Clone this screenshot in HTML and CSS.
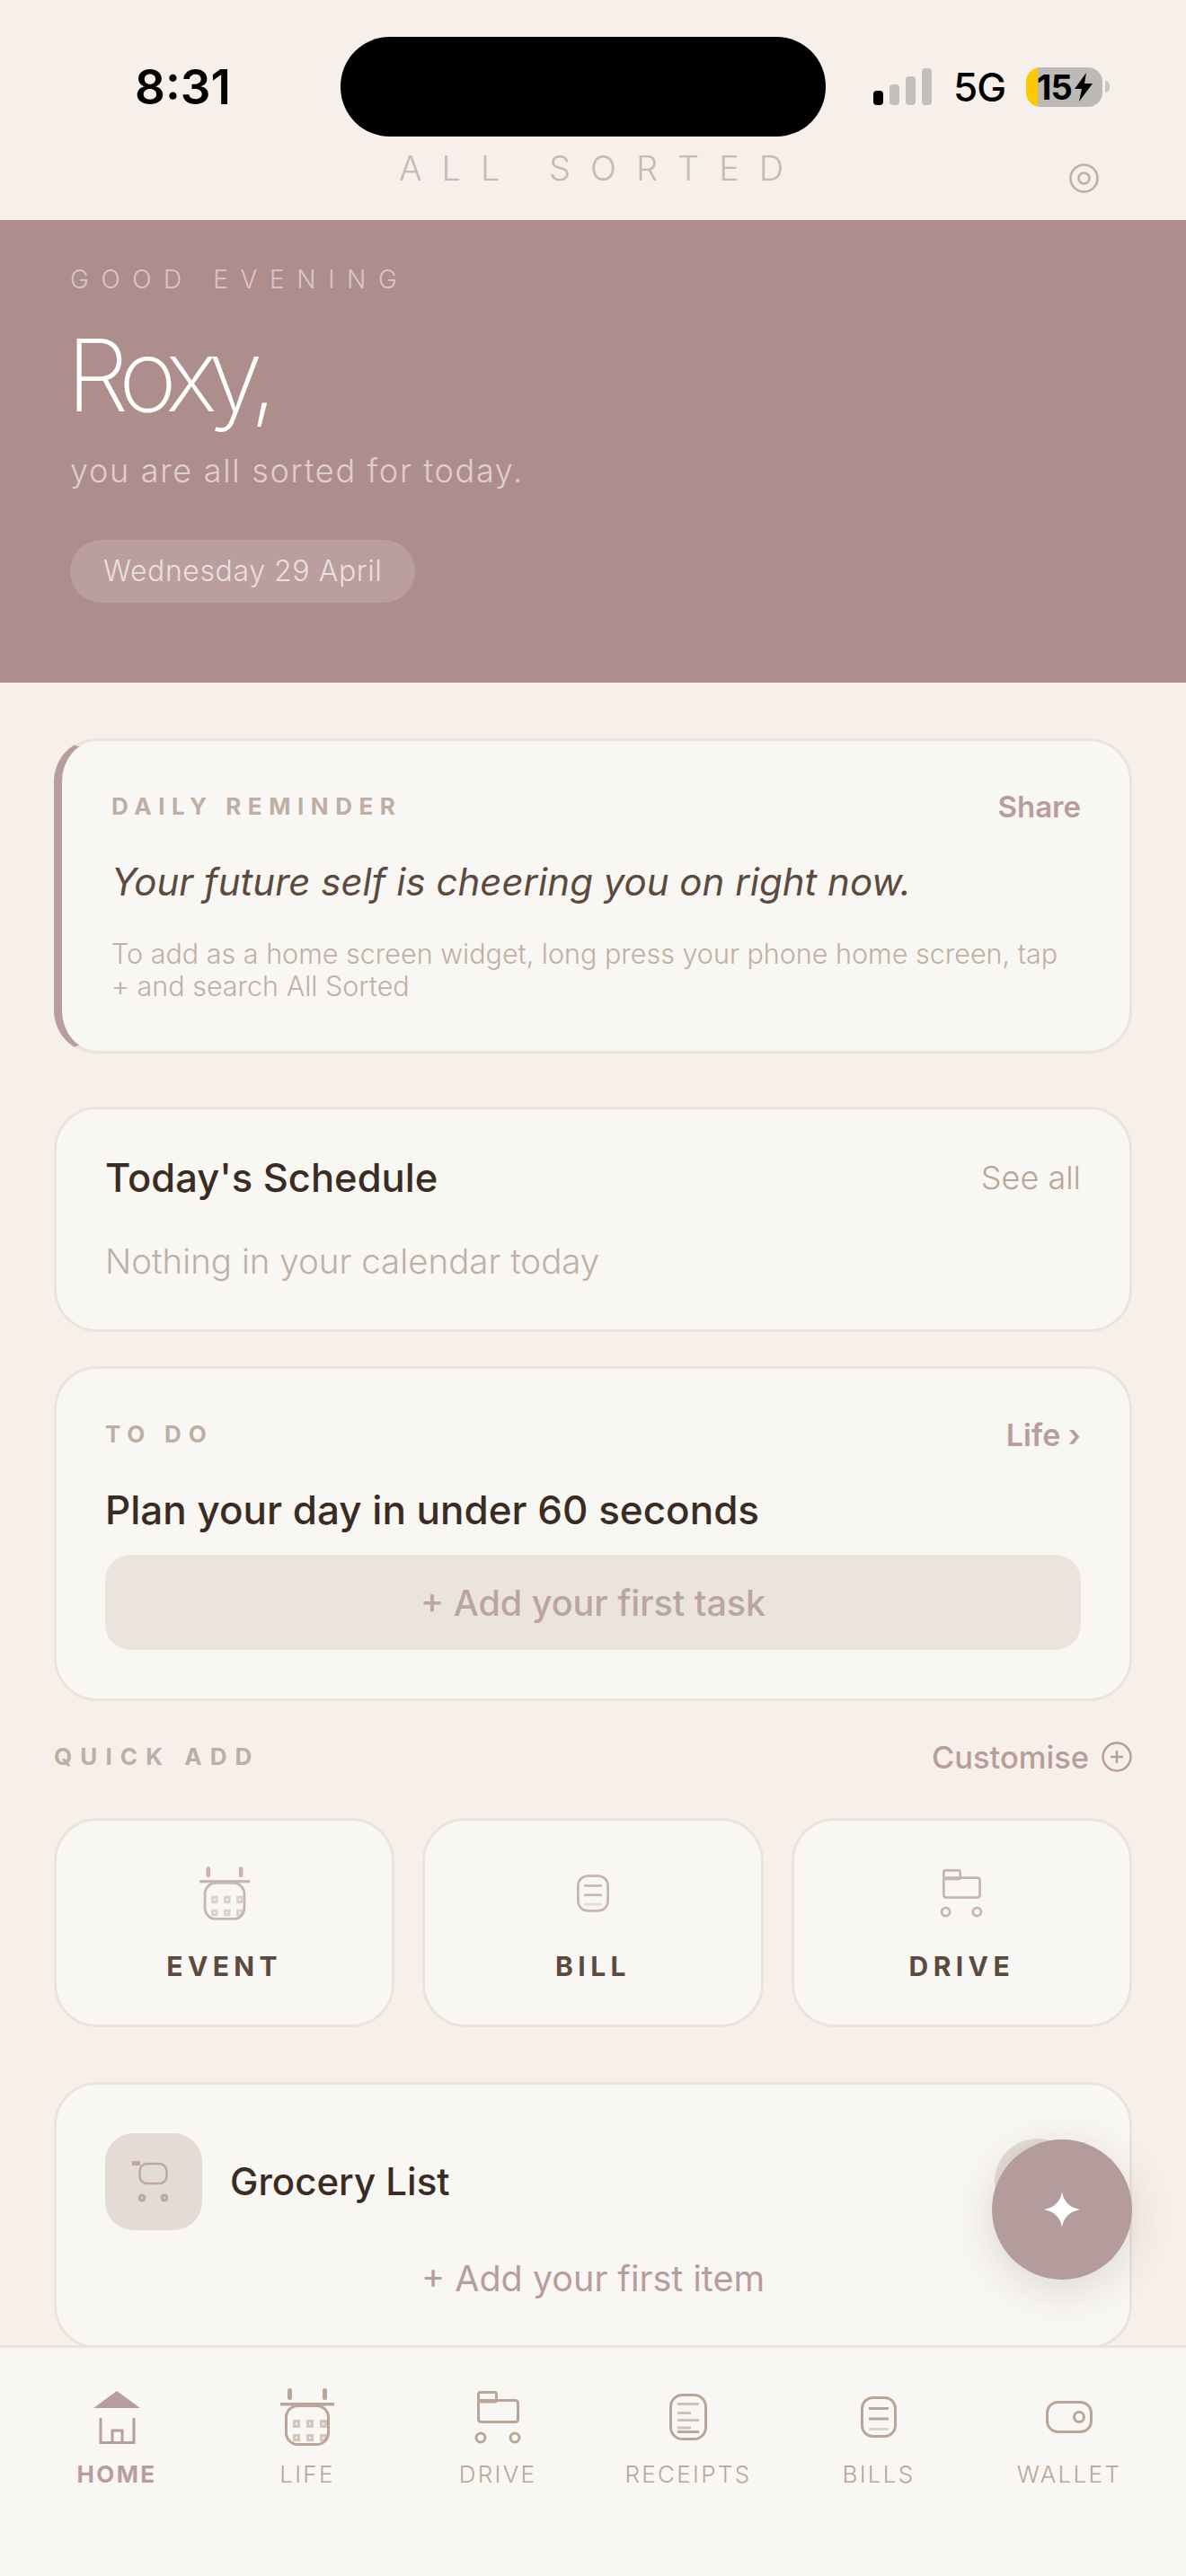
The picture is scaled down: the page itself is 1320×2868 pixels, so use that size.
FILE: index.html
```html
<!DOCTYPE html>
<html lang="en">
<head>
    <meta charset="UTF-8">
    <meta name="viewport" content="width=device-width, initial-scale=1.0">
    <title>All Sorted</title>
    <link rel="stylesheet" href="styles.css">
</head>
<body>
    <!-- icons used more than once -->
    <svg class="sprite" aria-hidden="true">
        <symbol id="i-calendar" viewBox="0 0 60 64">
            <rect x="8" y="0" width="5" height="13" rx="2.5" fill="currentColor"/>
            <rect x="47" y="0" width="5" height="13" rx="2.5" fill="currentColor"/>
            <rect x="0" y="16" width="60" height="3.5" fill="currentColor"/>
            <rect x="6.5" y="19.5" width="47" height="43" rx="13" fill="none" stroke="currentColor" stroke-width="3"/>
            <g fill="currentColor" opacity=".6">
                <path fill-rule="evenodd" d="M14 35h8v9h-8zM17 38.500v2h2v-2zM29 35h8v9h-8zM32 38.500v2h2v-2zM44 35h8v9h-8zM47 38.500v2h2v-2zM14 51h8v8h-8zM17 54v2h2v-2zM29 51h8v8h-8zM32 54v2h2v-2zM44 51h8v8h-8zM47 54v2h2v-2z"/>
            </g>
        </symbol>
        <symbol id="i-bill" viewBox="0 0 40 46">
            <rect x="1.500" y="1.500" width="37" height="43" rx="12" fill="none" stroke="currentColor" stroke-width="3"/>
            <rect x="9" y="12" width="22" height="3" fill="currentColor"/>
            <rect x="9" y="23.500" width="22" height="3" fill="currentColor"/>
            <rect x="9" y="35" width="22" height="3" fill="currentColor" opacity=".45"/>
        </symbol>
        <symbol id="i-drive" viewBox="0 0 52 59">
            <rect x="4.500" y="1.500" width="20" height="10.500" rx="2" fill="none" stroke="currentColor" stroke-width="3"/>
            <rect x="4.500" y="10.500" width="44" height="24" rx="3" fill="none" stroke="currentColor" stroke-width="3"/>
            <circle cx="7" cy="52" r="5" fill="none" stroke="currentColor" stroke-width="3"/>
            <circle cx="45" cy="52" r="5" fill="none" stroke="currentColor" stroke-width="3"/>
        </symbol>
    </svg>

    <header class="top">
        <div class="status">
            <span class="time">8:31</span>
            <span class="island"></span>
            <span class="signal">
                <i class="bar bar-on"></i><i class="bar bar-2"></i><i class="bar bar-3"></i><i class="bar bar-4"></i>
            </span>
            <span class="net">5G</span>
            <span class="battery">
                <span class="battery-level">15</span>
                <svg class="bolt" viewBox="0 0 22 32"><path d="M14 0 1 18h8L6 32 21 12h-9z"/></svg>
            </span>
            <span class="battery-nub"></span>
        </div>
        <div class="brand">
            <span class="brand-name">ALL SORTED</span>
            <svg class="target" viewBox="0 0 33 33">
                <circle cx="16.500" cy="16.500" r="15" fill="none" stroke="currentColor" stroke-width="2.500"/>
                <circle cx="16.500" cy="16.500" r="6" fill="none" stroke="currentColor" stroke-width="2.500"/>
            </svg>
        </div>
    </header>

    <section class="hero">
        <div class="greeting">GOOD EVENING</div>
        <h1 class="name">Roxy,</h1>
        <p class="sub">you are all sorted for today.</p>
        <span class="date-pill">Wednesday 29 April</span>
    </section>

    <main class="content">
        <section class="card reminder">
            <div class="card-head">
                <span class="label label-reminder">DAILY REMINDER</span>
                <a class="link" href="#">Share</a>
            </div>
            <p class="quote">Your future self is cheering you on right now.</p>
            <p class="hint">To add as a home screen widget, long press your phone home screen, tap + and search All Sorted</p>
        </section>

        <section class="card schedule">
            <div class="card-head head-tall">
                <h2 class="title schedule-title">Today's Schedule</h2>
                <a class="see-all" href="#">See all</a>
            </div>
            <p class="empty">Nothing in your calendar today</p>
        </section>

        <section class="card todo">
            <div class="card-head">
                <span class="label">TO DO</span>
                <a class="link link-life" href="#">Life ›</a>
            </div>
            <h2 class="title todo-title">Plan your day in under 60 seconds</h2>
            <button class="add-task" type="button">+ Add your first task</button>
        </section>

        <div class="quick-head">
            <span class="label label-quick">QUICK ADD</span>
            <a class="customise" href="#">
                Customise
                <svg class="plus" viewBox="0 0 34 34">
                    <circle cx="17" cy="17" r="15.500" fill="none" stroke="currentColor" stroke-width="2.500"/>
                    <path d="M17 10v14M10 17h14" stroke="currentColor" stroke-width="2.500"/>
                </svg>
            </a>
        </div>

        <div class="tiles">
            <a class="tile" href="#">
                <span class="tile-icon"><svg class="ic-event"><use href="#i-calendar"/></svg></span>
                <span class="tile-label">EVENT</span>
            </a>
            <a class="tile" href="#">
                <span class="tile-icon"><svg class="ic-bill"><use href="#i-bill"/></svg></span>
                <span class="tile-label">BILL</span>
            </a>
            <a class="tile" href="#">
                <span class="tile-icon"><svg class="ic-drive"><use href="#i-drive"/></svg></span>
                <span class="tile-label">DRIVE</span>
            </a>
        </div>

        <section class="card grocery">
            <div class="grocery-row">
                <span class="grocery-icon">
                    <svg viewBox="0 0 40 46">
                        <rect x="0" y="0" width="9" height="5" fill="currentColor"/>
                        <rect x="8.500" y="3" width="30" height="22" rx="8" fill="none" stroke="currentColor" stroke-width="2.500"/>
                        <circle cx="11" cy="41" r="4.500" fill="currentColor"/>
                        <circle cx="36" cy="41" r="4.500" fill="currentColor"/>
                        <circle cx="11" cy="41" r="1" fill="#e4dbd5"/>
                        <circle cx="36" cy="41" r="1" fill="#e4dbd5"/>
                    </svg>
                </span>
                <h2 class="title grocery-title">Grocery List</h2>
                <span class="grocery-more"></span>
            </div>
            <p class="add-item">+ Add your first item</p>
        </section>
    </main>

    <nav class="tabbar">
        <a class="tab tab-active" href="#">
            <span class="tab-icon">
                <svg class="ic-home" viewBox="0 0 52 59">
                    <path d="M26 0 52 19H0z" fill="currentColor"/>
                    <path d="M8 30v27.500h37V30M21 57.500V44h11v13.500" fill="none" stroke="currentColor" stroke-width="3"/>
                </svg>
            </span>
            HOME
        </a>
        <a class="tab" href="#">
            <span class="tab-icon"><svg class="ic-life"><use href="#i-calendar"/></svg></span>
            LIFE
        </a>
        <a class="tab" href="#">
            <span class="tab-icon"><svg class="ic-tab-drive"><use href="#i-drive"/></svg></span>
            DRIVE
        </a>
        <a class="tab" href="#">
            <span class="tab-icon">
                <svg class="ic-receipt" viewBox="0 0 42 52">
                    <rect x="1.500" y="1.500" width="39" height="49" rx="13" fill="none" stroke="currentColor" stroke-width="3"/>
                    <g fill="currentColor" opacity=".65">
                        <rect x="9" y="10" width="24" height="3"/>
                        <rect x="9" y="20" width="15" height="3"/>
                        <rect x="9" y="28" width="24" height="3"/>
                        <rect x="9" y="36.500" width="15" height="3"/>
                    </g>
                    <rect x="9" y="41" width="24" height="3" fill="currentColor"/>
                </svg>
            </span>
            RECEIPTS
        </a>
        <a class="tab" href="#">
            <span class="tab-icon"><svg class="ic-tab-bill"><use href="#i-bill"/></svg></span>
            BILLS
        </a>
        <a class="tab" href="#">
            <span class="tab-icon">
                <svg class="ic-wallet" viewBox="0 0 52 36">
                    <rect x="1.500" y="1.500" width="49" height="33" rx="12" fill="none" stroke="currentColor" stroke-width="3"/>
                    <circle cx="37" cy="18" r="5.500" fill="none" stroke="currentColor" stroke-width="3"/>
                </svg>
            </span>
            WALLET
        </a>
    </nav>

    <button class="fab" type="button" aria-label="Assistant">
        <svg viewBox="0 0 40 40"><path d="M20 0C21.500 10 27 17.500 40 20 27 22.500 21.500 30 20 40 18.500 30 13 22.500 0 20 13 17.500 18.500 10 20 0Z"/></svg>
    </button>
</body>
</html>
```

FILE: styles.css
```css
* {
    box-sizing: border-box;
}
html, body {
    margin: 0;
    padding: 0;
}
body {
    position: relative;
    display: flex;
    flex-direction: column;
    width: 1320px;
    height: 2868px;
    overflow: hidden;
    background-color: #f7f0ea;
    font-family: Inter, "Liberation Sans", sans-serif;
    color: #3a2c23;
}
h1, h2, p {
    margin: 0;
    font: inherit;
}
a {
    color: inherit;
    text-decoration: none;
}
.sprite {
    display: none;
}

/* status bar + brand */
.top {
    flex: none;
    height: 245px;
    padding-top: 41px;
}
.status {
    display: flex;
    align-items: center;
    height: 111px;
    padding-left: 150px;
    color: #000;
}
.time {
    width: 229px;
    font-size: 53px;
    font-weight: 600;
}
.island {
    width: 540px;
    height: 111px;
    border-radius: 55px;
    background-color: #000;
}
.signal {
    display: flex;
    align-items: flex-end;
    gap: 7px;
    height: 41px;
    margin-left: 53px;
}
.bar {
    width: 11px;
    border-radius: 4px;
    background-color: #c3bfba;
}
.bar-on {
    height: 16px;
    background-color: #000;
}
.bar-2 {
    height: 23px;
}
.bar-3 {
    height: 32px;
}
.bar-4 {
    height: 41px;
}
.net {
    margin-left: 24px;
    font-size: 44px;
    font-weight: 500;
    letter-spacing: -1px;
}
.battery {
    display: flex;
    align-items: center;
    width: 85px;
    height: 44px;
    margin-left: 23px;
    padding-left: 12px;
    border-radius: 16px;
    background: linear-gradient(to right, #fbc900 13px, #bdb9b4 13px);
}
.battery-level {
    font-size: 38px;
    font-weight: 700;
    letter-spacing: -1px;
}
.bolt {
    width: 22px;
    height: 32px;
    margin-left: 2px;
}
.bolt path {
    fill: #000;
}
.battery-nub {
    width: 5px;
    height: 13px;
    margin-left: 3px;
    border-radius: 0 6px 6px 0;
    background-color: #c9c5c0;
}
.brand {
    display: grid;
    grid-template-columns: 1fr auto 1fr;
    align-items: center;
    height: 93px;
}
.brand-name {
    grid-column: 2;
    padding: 0 0 23px 18px;
    font-size: 38px;
    font-weight: 300;
    letter-spacing: 22px;
    color: #c9b8b4;
}
.target {
    justify-self: end;
    width: 33px;
    height: 33px;
    margin-right: 97px;
    color: #bfaea2;
}

/* hero band */
.hero {
    flex: none;
    height: 515px;
    padding: 46px 0 0 78px;
    background-color: #ae8e8d;
    color: #fff;
}
.greeting {
    font-size: 28px;
    line-height: 40px;
    font-weight: 300;
    letter-spacing: 13.6px;
    color: #d9c6c6;
}
.name {
    margin: 27px 0 0 -4px;
    font-size: 111px;
    line-height: 120px;
    font-weight: 200;
    letter-spacing: -10px;
}
.sub {
    margin-top: 24px;
    font-size: 36px;
    line-height: 44px;
    font-weight: 300;
    letter-spacing: 1.7px;
    color: #e0cfcf;
}
.date-pill {
    display: inline-block;
    margin-top: 55px;
    padding: 0 37px;
    height: 70px;
    line-height: 70px;
    border-radius: 35px;
    background-color: #ba9f9e;
    font-size: 32px;
    font-weight: 300;
    letter-spacing: 0.6px;
    color: #ecdfdf;
}

/* main column */
.content {
    flex: 1;
    min-height: 0;
    overflow: hidden;
    padding: 62px 60px 0;
}
.card {
    border: 3px solid #ebe4db;
    border-radius: 48px;
    background-color: #f9f7f3;
    padding: 57px 54px 54px;
}
.card-head {
    display: flex;
    justify-content: space-between;
    align-items: center;
    height: 32px;
}
.label {
    font-size: 26px;
    line-height: 32px;
    font-weight: 700;
    letter-spacing: 0.3em;
    color: #bfaea2;
}
.link {
    font-size: 33px;
    font-weight: 600;
    color: #b89d9d;
}
.link-life {
    font-size: 34px;
}
.reminder {
    border-left: 9px solid #b89d9d;
    padding-left: 55px;
}
.label-reminder {
    letter-spacing: 0.29em;
}
.quote {
    margin-top: 42px;
    font-size: 42px;
    line-height: 52px;
    font-weight: 400;
    font-style: italic;
    color: #5b4a3d;
}
.hint {
    margin-top: 36px;
    font-size: 30.5px;
    line-height: 36px;
    font-weight: 300;
    color: #c0afa3;
}
.title {
    font-size: 43.8px;
    line-height: 54px;
    font-weight: 500;
    color: #3a2c23;
}
.schedule {
    margin-top: 59px;
    padding-top: 49px;
    padding-bottom: 52px;
}
.schedule-title {
    font-size: 43.5px;
}
.head-tall {
    height: 54px;
}
.see-all {
    font-size: 36px;
    font-weight: 300;
    color: #b9a698;
}
.empty {
    margin-top: 42px;
    font-size: 38.5px;
    line-height: 48px;
    font-weight: 300;
    color: #c0afa3;
}
.todo {
    margin-top: 38px;
}
.todo-title {
    margin-top: 41px;
    font-size: 44px;
}
.add-task {
    display: block;
    width: 100%;
    height: 106px;
    margin-top: 23px;
    padding-top: 2px;
    border: 0;
    border-radius: 28px;
    background-color: #ebe4dd;
    font-family: inherit;
    font-size: 39.5px;
    font-weight: 500;
    color: #bba5a2;
}

/* quick add */
.quick-head {
    display: flex;
    justify-content: space-between;
    align-items: center;
    height: 40px;
    margin-top: 42px;
}
.label-quick {
    letter-spacing: 0.35em;
}
.customise {
    display: flex;
    align-items: center;
    gap: 14px;
    font-size: 34.5px;
    font-weight: 500;
    color: #b89d9d;
}
.plus {
    width: 34px;
    height: 34px;
}
.tiles {
    display: grid;
    grid-template-columns: repeat(3, 1fr);
    gap: 31px;
    margin-top: 48px;
}
.tile {
    display: flex;
    flex-direction: column;
    align-items: center;
    height: 233px;
    padding-top: 49px;
    border: 3px solid #ebe4db;
    border-radius: 48px;
    background-color: #f9f7f3;
}
.tile-icon {
    display: flex;
    align-items: center;
    justify-content: center;
    height: 64px;
    color: #c8b5b3;
}
.tile-label {
    margin-top: 31px;
    font-size: 30px;
    line-height: 36px;
    font-weight: 700;
    letter-spacing: 0.18em;
    color: #5b4a3d;
}
.ic-event {
    width: 56px;
    height: 60px;
}
.ic-bill {
    width: 36px;
    height: 42px;
}
.ic-drive {
    width: 48px;
    height: 54px;
}

/* grocery */
.grocery {
    margin-top: 61px;
    height: 297px;
    padding-top: 54px;
}
.grocery-row {
    display: flex;
    align-items: center;
    height: 108px;
}
.grocery-icon {
    display: flex;
    align-items: center;
    justify-content: center;
    flex: none;
    width: 108px;
    height: 108px;
    padding-right: 8px;
    border-radius: 32px;
    background-color: #e4dbd5;
    color: #bfa7a6;
}
.grocery-icon svg {
    width: 40px;
    height: 46px;
}
.grocery-title {
    margin-left: 31px;
    font-size: 42px;
}
.grocery-more {
    width: 96px;
    height: 96px;
    margin-left: auto;
    border-radius: 50%;
    background-color: #e4dbd5;
}
.add-item {
    margin-top: 30px;
    font-size: 39.5px;
    line-height: 48px;
    text-align: center;
    color: #b89d9d;
}

/* tab bar */
.tabbar {
    flex: none;
    display: grid;
    grid-template-columns: repeat(6, 1fr);
    height: 257px;
    padding: 45px 24px 0;
    border-top: 3px solid #ebe4db;
    background-color: #f9f7f3;
}
.tab {
    display: flex;
    flex-direction: column;
    align-items: center;
    font-size: 26px;
    line-height: 32px;
    font-weight: 300;
    letter-spacing: 0.09em;
    color: #b9a698;
}
.tab-active {
    font-weight: 700;
    color: #b89d9d;
}
.tab-icon {
    display: flex;
    align-items: center;
    justify-content: center;
    height: 64px;
    margin-bottom: 16px;
}
.ic-home, .ic-tab-drive {
    width: 52px;
    height: 59px;
}
.ic-life {
    width: 60px;
    height: 64px;
}
.ic-receipt {
    width: 42px;
    height: 52px;
}
.ic-tab-bill {
    width: 40px;
    height: 46px;
}
.ic-wallet {
    width: 52px;
    height: 36px;
}

/* floating button */
.fab {
    position: absolute;
    right: 60px;
    bottom: 330px;
    display: flex;
    align-items: center;
    justify-content: center;
    width: 156px;
    height: 156px;
    padding: 0;
    border: 0;
    border-radius: 50%;
    background-color: #b59c9c;
    box-shadow: 0 10px 48px rgba(70, 50, 35, 0.16);
}
.fab svg {
    width: 40px;
    height: 40px;
    fill: #fff;
}
```
